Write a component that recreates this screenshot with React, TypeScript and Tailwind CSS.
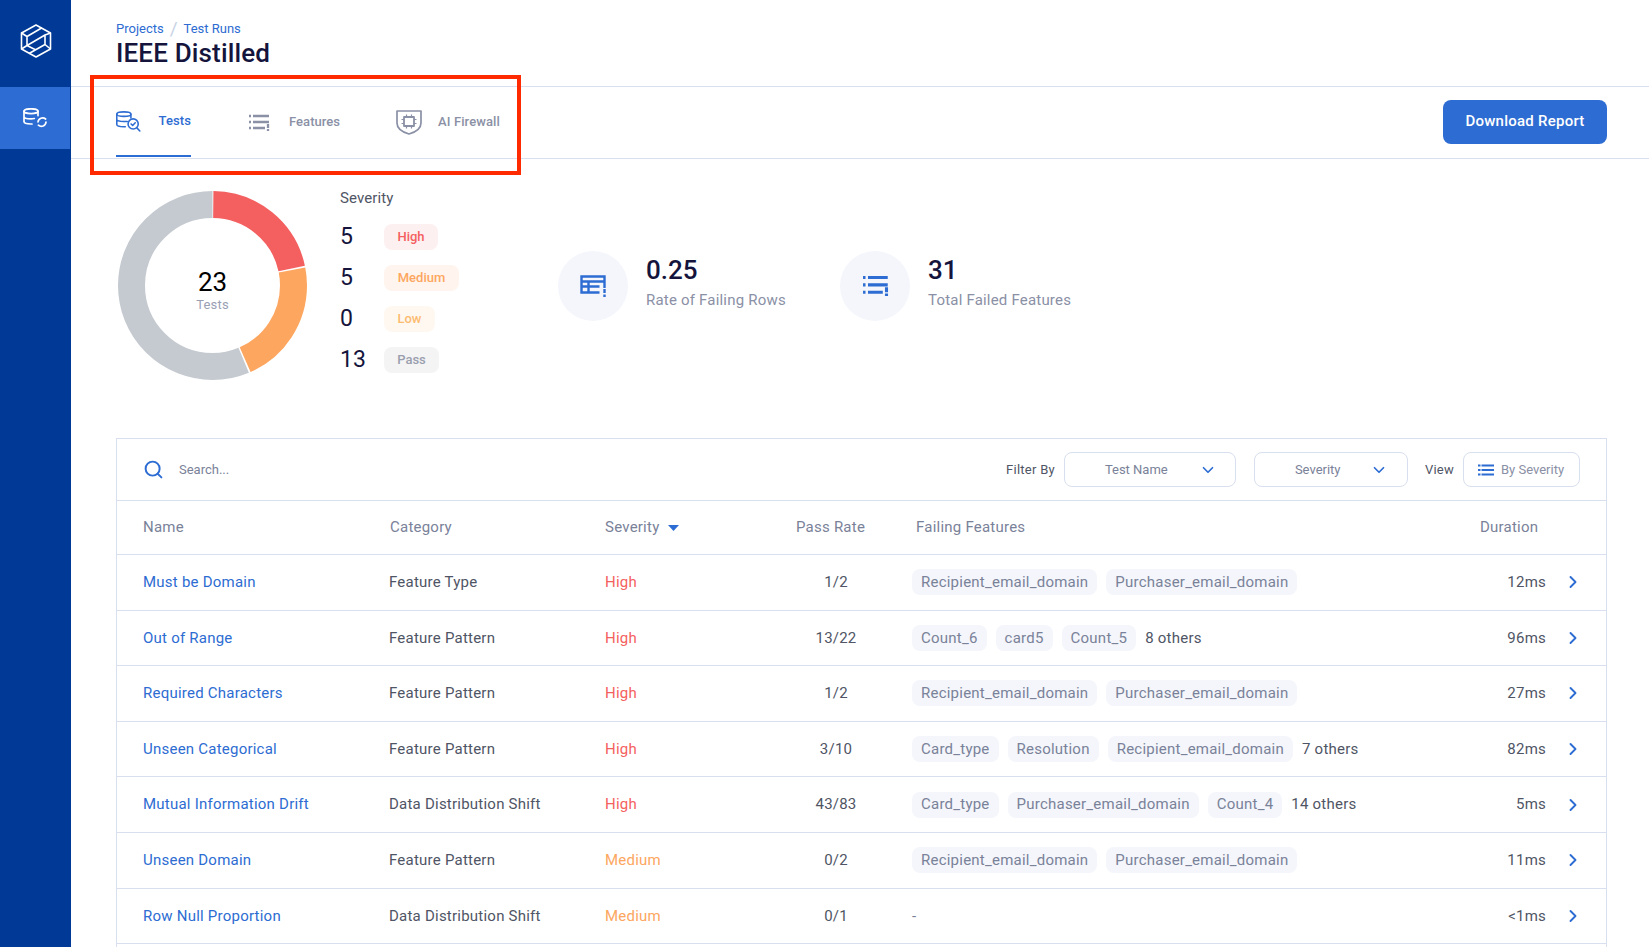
import { ChevronDown, ChevronRight, Search } from "lucide-react";

const rows = [
  { name: "Must be Domain", category: "Feature Type", severity: "High", rate: "1/2", chips: ["Recipient_email_domain", "Purchaser_email_domain"], others: "", duration: "12ms" },
  { name: "Out of Range", category: "Feature Pattern", severity: "High", rate: "13/22", chips: ["Count_6", "card5", "Count_5"], others: "8 others", duration: "96ms" },
  { name: "Required Characters", category: "Feature Pattern", severity: "High", rate: "1/2", chips: ["Recipient_email_domain", "Purchaser_email_domain"], others: "", duration: "27ms" },
  { name: "Unseen Categorical", category: "Feature Pattern", severity: "High", rate: "3/10", chips: ["Card_type", "Resolution", "Recipient_email_domain"], others: "7 others", duration: "82ms" },
  { name: "Mutual Information Drift", category: "Data Distribution Shift", severity: "High", rate: "43/83", chips: ["Card_type", "Purchaser_email_domain", "Count_4"], others: "14 others", duration: "5ms" },
  { name: "Unseen Domain", category: "Feature Pattern", severity: "Medium", rate: "0/2", chips: ["Recipient_email_domain", "Purchaser_email_domain"], others: "", duration: "11ms" },
  { name: "Row Null Proportion", category: "Data Distribution Shift", severity: "Medium", rate: "0/1", chips: [], others: "", duration: "<1ms" },
];

const legend = [
  { count: "5", label: "High", cls: "bg-[#fdf0f0] text-[#f45f60] w-[54px]" },
  { count: "5", label: "Medium", cls: "bg-[#fff5ee] text-[#fda660] w-[75px]" },
  { count: "0", label: "Low", cls: "bg-[#fff8f1] text-[#fdbb70] w-[51px]" },
  { count: "13", label: "Pass", cls: "bg-[#f4f4f5] text-[#9a9fae] w-[55px]" },
];

function Logo() {
  return (
    <svg width="32" height="34" viewBox="0 0 32 34" fill="none" stroke="white" strokeWidth="1.6" strokeLinejoin="round">
      <path d="M16 1 30.5 9v16L16 33 1.5 25V9z" />
      <path d="M1.5 9 7 12.5v9L1.5 25M7 12.5 22 3.7M7 21.5 25 11M30.5 9 25 11v9.5L30.5 25M25 20.5 9 29.5M7 21.5 16 26" />
    </svg>
  );
}

function DbSyncIcon() {
  return (
    <svg width="24" height="20" viewBox="0 0 24 20" fill="none" stroke="white" strokeWidth="1.7" strokeLinecap="round">
      <ellipse cx="8" cy="3.2" rx="7" ry="2.4" />
      <path d="M1 3.2v10.4c0 1.4 3 2.4 7 2.4h1M15 3.2v4.4M1 8.4c0 1.4 3 2.4 7 2.4 1.2 0 2.3-.1 3.3-.3" />
      <path d="M15 14a4.6 4.6 0 0 1 7.6-3M23 14a4.6 4.6 0 0 1-7.6 3.2" />
    </svg>
  );
}

function TestsIcon() {
  return (
    <svg width="25" height="21" viewBox="0 0 25 21" fill="none" stroke="#2d6cd2" strokeWidth="1.6" strokeLinecap="round" strokeLinejoin="round">
      <ellipse cx="8" cy="3" rx="7.2" ry="2.3" />
      <path d="M.8 3v10.5c0 1.3 3 2.3 7.2 2.3h1.5M15.2 3v4M.8 8.2c0 1.3 3 2.3 7.2 2.3h3.5" />
      <circle cx="17.5" cy="13" r="5.2" />
      <path d="m15.4 13 1.6 1.5 2.6-2.7M21.3 17l3 3.2" />
    </svg>
  );
}

function FailedListIcon({ color, width, height, weight }: { color: string; width: number; height: number; weight: number }) {
  return (
    <svg width={width} height={height} viewBox="0 0 21 17" fill="none" stroke={color} strokeWidth={weight}>
      <path d="M0 2h2M4 2h16M0 8h2M4 8h16M0 14h2M4 14h12M19 10v4M19 15v2" />
    </svg>
  );
}

function ShieldIcon() {
  return (
    <svg width="26" height="25" viewBox="0 0 26 25" fill="none" stroke="#8a90a5" strokeWidth="1.7" strokeLinejoin="round">
      <path d="M1 1h24v12c0 5.5-5 9-12 11C6 22 1 18.500 1 13z" />
      <rect x="8" y="7" width="10" height="9" strokeWidth="1.8" />
      <path d="M10.500 4.500V7M15.500 4.500V7M10.500 16v2.500M15.500 16v2.500M5.500 9.500H8M5.500 13.500H8M18 9.500h2.500M18 13.500h2.500" strokeWidth="1.2" />
    </svg>
  );
}

function TableAlertIcon() {
  return (
    <svg width="27" height="22" viewBox="0 0 26 22" fill="none" stroke="#2d6cd2" strokeWidth="2.4">
      <path d="M24 13V1.500H1v16h18M1 6.500h23M1 11.500h18M8 6.500v11" />
      <path d="M24 14v4M24 19.500v2.500" />
    </svg>
  );
}

function Donut() {
  const c = 2 * Math.PI * 81;
  const high = (5 / 23) * c;
  const gap = 1.6;
  return (
    <div className="relative w-[189px] h-[189px] ml-[2px] shrink-0">
      <svg width="189" height="189" viewBox="0 0 189 189" fill="none" className="-rotate-90">
        <circle cx="94.500" cy="94.500" r="81" stroke="#c5cad0" strokeWidth="27" strokeDasharray={`${c - 2 * high - gap} ${c}`} strokeDashoffset={-2 * high - gap / 2} />
        <circle cx="94.500" cy="94.500" r="81" stroke="#f45f60" strokeWidth="27" strokeDasharray={`${high - gap} ${c}`} strokeDashoffset={-gap / 2} />
        <circle cx="94.500" cy="94.500" r="81" stroke="#fda660" strokeWidth="27" strokeDasharray={`${high - gap} ${c}`} strokeDashoffset={-high - gap / 2} />
      </svg>
      <div className="absolute inset-0 flex flex-col items-center justify-center pt-[8px]">
        <span className="text-[26px] leading-[30px] text-black">23</span>
        <span className="text-[13px] leading-[16px] tracking-[0.2px] text-[#9aa0b4]">Tests</span>
      </div>
    </div>
  );
}

export default function App() {
  return (
    <div className="relative flex h-screen overflow-hidden bg-white font-['Roboto',sans-serif]">
      <aside className="w-[71px] shrink-0 bg-[#003a96] flex flex-col">
        <div className="h-[87px] flex items-center justify-center pb-[6px]">
          <Logo />
        </div>
        <div className="h-[62px] w-[70px] bg-[#2d6cd2] flex items-center justify-center">
          <DbSyncIcon />
        </div>
      </aside>

      <main className="flex-1 min-w-0">
        <header className="h-[87px] border-b border-[#d8dfee] pl-[45px] pt-[21px]">
          <div className="flex items-center text-[13px] leading-[16px] text-[#2d6cd2]">
            <span>Projects</span>
            <span className="mx-[6px] text-[#c9d3e6] text-[19px] leading-[16px]">/</span>
            <span>Test Runs</span>
          </div>
          <h1 className="text-[26px] leading-[30px] mt-[1px] font-medium tracking-[0.15px] text-[#14143c]">IEEE Distilled</h1>
        </header>

        <div className="h-[72px] border-b border-[#d8dfee] flex items-center justify-between pl-[45px] pr-[42px]">
          <nav className="flex h-full items-start">
            <div className="flex items-center gap-[18px] w-[75px] border-b-[2px] border-[#2d6cd2] h-[70px]">
              <TestsIcon />
              <span className="text-[13px] font-medium tracking-[0.1px] text-[#2d6cd2]">Tests</span>
            </div>
            <div className="flex items-center gap-[19px] ml-[58px] h-[70px]">
              <FailedListIcon color="#8a90a5" width={21} height={17} weight={2.3} />
              <span className="text-[13px] font-medium tracking-[0.05px] text-[#8a90a5]">Features</span>
            </div>
            <div className="flex items-center gap-[16px] ml-[56px] h-[70px]">
              <ShieldIcon />
              <span className="text-[13px] font-medium tracking-[0.1px] text-[#8a90a5]">AI Firewall</span>
            </div>
          </nav>
          <button className="w-[164px] h-[44px] mb-[2px] rounded-lg bg-[#2d6cd2] text-white text-[15px] font-medium tracking-[0.25px]">Download Report</button>
        </div>

        <section className="pl-[45px] pr-[42px] pt-[32px]">
          <div className="flex items-center h-[189px]">
            <Donut />
            <div className="ml-[33px] w-[218px] shrink-0 self-start">
              <div className="text-[15px] leading-[18px] tracking-[0.1px] text-[#4f5565] mt-[-2px]">Severity</div>
              <div className="mt-[17px] flex flex-col gap-[15px]">
                {legend.map((item) => (
                  <div key={item.label} className="flex items-center h-[26px]">
                    <span className="w-[44px] text-[23px] leading-[26px] text-[#14143c]">{item.count}</span>
                    <span className={`h-[26px] rounded-lg flex items-center justify-center text-[13px] font-medium ${item.cls}`}>{item.label}</span>
                  </div>
                ))}
              </div>
            </div>
            <div className="flex items-center gap-[18px] w-[282px] shrink-0">
              <div className="w-[70px] h-[70px] rounded-full bg-[#f4f6fb] flex items-center justify-center">
                <TableAlertIcon />
              </div>
              <div className="mb-[9px]">
                <div className="text-[26px] leading-[32px] font-medium text-[#14143c]">0.25</div>
                <div className="text-[15px] leading-[18px] mt-[5px] tracking-[0.2px] text-[#8a90a5]">Rate of Failing Rows</div>
              </div>
            </div>
            <div className="flex items-center gap-[18px] shrink-0">
              <div className="w-[70px] h-[70px] rounded-full bg-[#f4f6fb] flex items-center justify-center pl-[2px]">
                <FailedListIcon color="#2d6cd2" width={26} height={21} weight={2.5} />
              </div>
              <div className="mb-[9px]">
                <div className="text-[26px] leading-[32px] font-medium text-[#14143c]">31</div>
                <div className="text-[15px] leading-[18px] mt-[5px] tracking-[0.2px] text-[#8a90a5]">Total Failed Features</div>
              </div>
            </div>
          </div>

          <div className="mt-[58px] border border-[#d8dfee] tracking-[0.23px]">
            <div className="h-[62px] border-b border-[#d8dfee] flex items-center pl-[26px] pr-[26px]">
              <Search size={21} strokeWidth={2.25} className="text-[#2d6cd2]" />
              <span className="ml-[15px] text-[13px] tracking-normal text-[#7a8299]">Search...</span>
              <span className="ml-auto text-[13px] tracking-[0.25px] text-[#4f5565]">Filter By</span>
              <div className="ml-[9px] w-[172px] h-[35px] rounded-lg border border-[#d8dfee] flex items-center pl-[40px] pr-[18px] justify-between">
                <span className="text-[13px] tracking-normal text-[#7a8299]">Test Name</span>
                <ChevronDown size={18} strokeWidth={2.25} className="text-[#2d6cd2]" />
              </div>
              <div className="ml-[18px] w-[154px] h-[35px] rounded-lg border border-[#d8dfee] flex items-center pl-[40px] pr-[19px] justify-between">
                <span className="text-[13px] tracking-normal text-[#7a8299]">Severity</span>
                <ChevronDown size={18} strokeWidth={2.25} className="text-[#2d6cd2]" />
              </div>
              <span className="ml-[17px] text-[13px] tracking-[0.25px] text-[#4f5565]">View</span>
              <div className="ml-[9px] w-[117px] h-[35px] rounded-lg border border-[#d8dfee] flex items-center pl-[14px] gap-[7px]">
                <svg width="16" height="12" viewBox="0 0 16 12" fill="none" stroke="#2d6cd2" strokeWidth="2">
                  <path d="M0 1.500h2.500M3.500 1.500H16M0 6h2.500M3.500 6H16M0 10.500h2.500M3.500 10.500H16" />
                </svg>
                <span className="text-[13px] tracking-normal text-[#8a90a5]">By Severity</span>
              </div>
            </div>

            <div className="h-[54px] border-b border-[#d8dfee] grid grid-cols-[273px_215px_191px_120px_564px_auto] items-center text-[15px] text-[#7a8299]">
              <span className="pl-[26px]">Name</span>
              <span>Category</span>
              <span className="flex items-center gap-[9px]">
                Severity
                <svg width="11" height="6" viewBox="0 0 11 6" fill="#2d6cd2"><path d="M0 0h11L5.500 6z" /></svg>
              </span>
              <span>Pass Rate</span>
              <span>Failing Features</span>
              <span>Duration</span>
            </div>

            {rows.map((row) => (
              <div key={row.name} className="h-[55.6px] border-b border-[#d8dfee] grid grid-cols-[272px_216px_165px_132px_1fr_auto_60px] items-center text-[15px] text-[#4f5565]">
                <span className="pl-[26px] text-[#2d6cd2]">{row.name}</span>
                <span>{row.category}</span>
                <span className={row.severity === "High" ? "text-[#f45f60]" : "text-[#fda660]"}>{row.severity}</span>
                <span className="text-center">{row.rate}</span>
                <div className="pl-[10px] flex items-center gap-[9px]">
                  {row.chips.map((chip) => (
                    <span key={chip} className="h-[26px] px-[9px] rounded-lg bg-[#f4f6fb] text-[#7a8299] flex items-center">{chip}</span>
                  ))}
                  {row.others && <span>{row.others}</span>}
                  {row.chips.length === 0 && <span className="text-[#7a8299]">-</span>}
                </div>
                <span className="text-right">{row.duration}</span>
                <span className="flex justify-end pr-[23px]">
                  <ChevronRight size={20} strokeWidth={2.25} className="text-[#2d6cd2]" />
                </span>
              </div>
            ))}
            <div className="h-[40px]" />
          </div>
        </section>
      </main>

      <div className="absolute left-[90px] top-[75px] w-[431px] h-[100px] border-[4.5px] border-[#ff2a00] pointer-events-none" />
    </div>
  );
}
